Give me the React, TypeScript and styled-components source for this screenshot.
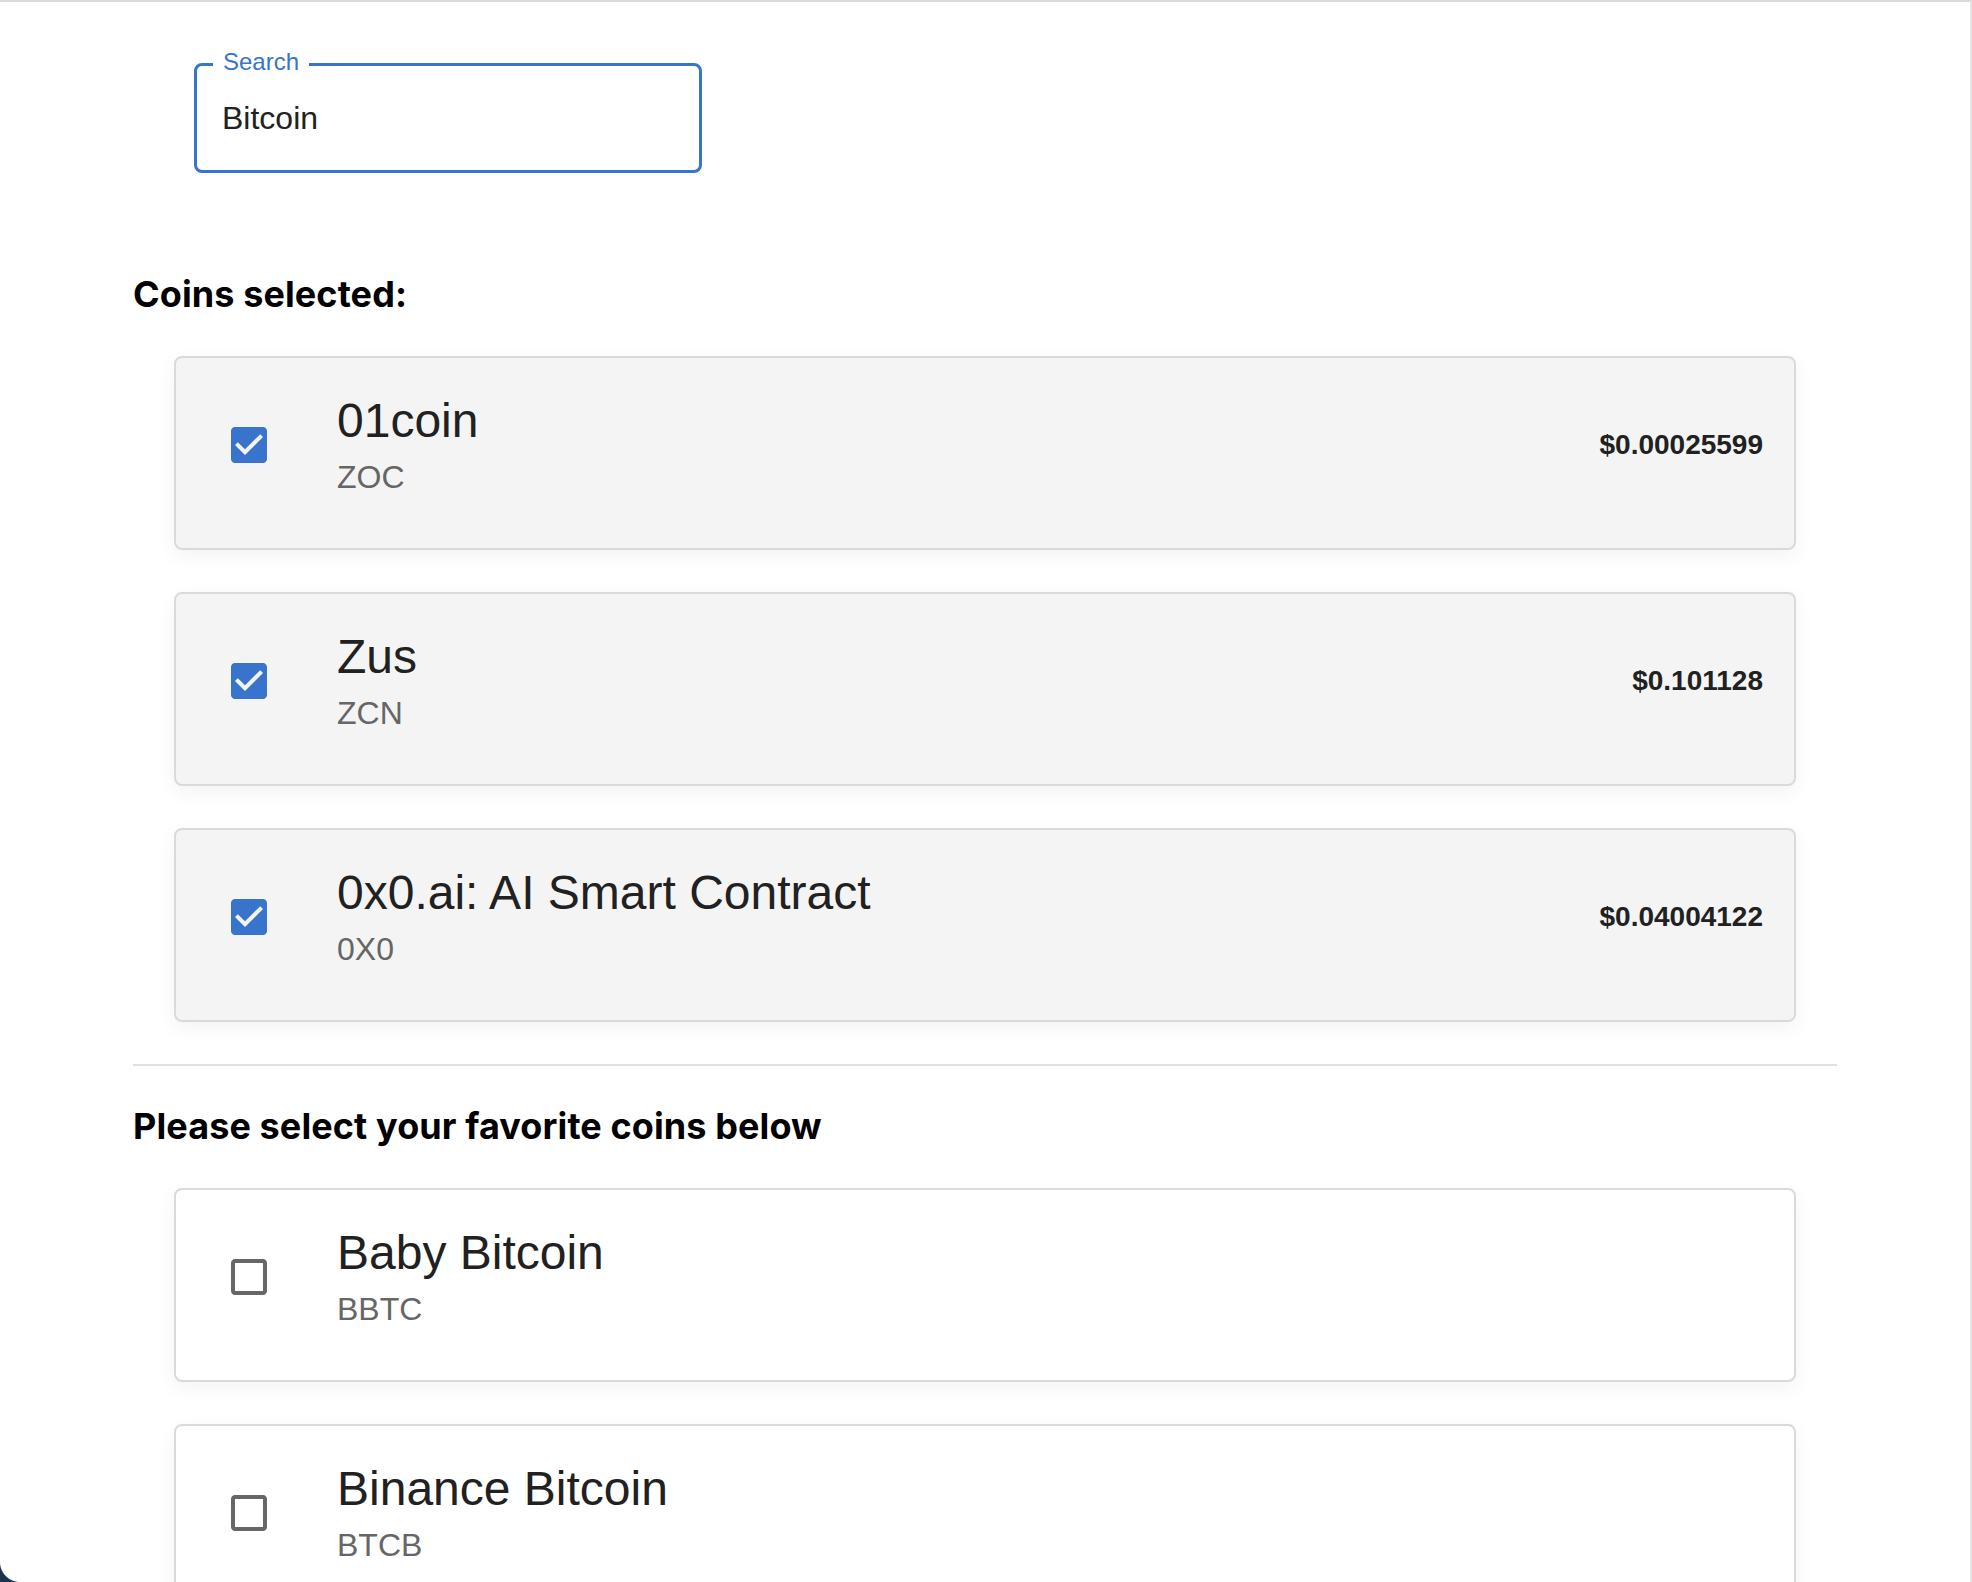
import React from "react";
import styled, { createGlobalStyle } from "styled-components";

const GlobalStyle = createGlobalStyle`
  html, body {
    margin: 0;
    padding: 0;
    background: #ffffff;
    overflow: hidden;
  }
  * { box-sizing: border-box; }
`;

const Frame = styled.div`
  height: 100vh;
  overflow: hidden;
  border-top: 2px solid #dcdcdc;
  border-right: 2px solid #e6e6e6;
  background: #ffffff;
  font-family: "Liberation Sans", Arial, sans-serif;
`;

const Page = styled.main`
  width: 1837px;
  padding: 61px 0 0 133px;
  display: flex;
  flex-direction: column;
`;

const SearchField = styled.label`
  position: relative;
  display: flex;
  align-items: center;
  margin-left: 61px;
  width: 508px;
  height: 110px;
  border: 3px solid #3874cb;
  border-radius: 8px;
  padding: 0 25px;
`;

const FieldLabel = styled.span`
  position: absolute;
  top: -16px;
  left: 16px;
  padding: 0 10px;
  background: #ffffff;
  color: #3874cb;
  font-size: 24px;
  line-height: 24px;
`;

const SearchInput = styled.input`
  border: none;
  outline: none;
  background: transparent;
  width: 100%;
  padding: 0;
  font-family: "Liberation Sans", Arial, sans-serif;
  font-size: 32px;
  color: #212121;
`;

const Heading = styled.h2<{ $gap: number }>`
  margin: ${(p) => p.$gap}px 0 0;
  font-family: Inter, Roboto, "Noto Sans", sans-serif;
  font-weight: 700;
  font-size: 36px;
  line-height: 44px;
  letter-spacing: 0.1px;
  color: #000000;
`;

const CardList = styled.div`
  margin: 40px 41px 0;
  display: flex;
  flex-direction: column;
  gap: 42px;
`;

const Card = styled.div<{ $selected: boolean }>`
  display: flex;
  align-items: center;
  gap: 46px;
  height: 194px;
  flex-shrink: 0;
  padding: 31px 31px 47px;
  border: 2px solid #dadada;
  border-radius: 8px;
  background: ${(p) => (p.$selected ? "#f4f4f4" : "#ffffff")};
  box-shadow: 0 6px 20px rgba(0, 0, 0, 0.05);
`;

const CheckButton = styled.span`
  width: 84px;
  height: 84px;
  padding: 18px;
  display: flex;
  flex-shrink: 0;
`;

const CoinInfo = styled.div`
  display: flex;
  flex-direction: column;
`;

const CoinName = styled.div`
  font-size: 48px;
  line-height: 64px;
  color: #212121;
`;

const CoinSymbol = styled.div`
  font-size: 32px;
  line-height: 48px;
  color: #666666;
`;

const Price = styled.div`
  margin-left: auto;
  font-size: 28px;
  font-weight: 700;
  color: #212121;
`;

const Divider = styled.hr`
  margin: 42px 0 0;
  border: none;
  height: 2px;
  background: #e0e0e0;
`;

const WindowCorner = styled.div`
  position: fixed;
  left: 0;
  bottom: 0;
  width: 20px;
  height: 20px;
  background: radial-gradient(circle at 100% 0, transparent 19.5px, #1d3352 20.5px);
`;

type Coin = { name: string; symbol: string; price?: string };

const selected: Coin[] = [
  { name: "01coin", symbol: "ZOC", price: "$0.00025599" },
  { name: "Zus", symbol: "ZCN", price: "$0.101128" },
  { name: "0x0.ai: AI Smart Contract", symbol: "0X0", price: "$0.04004122" },
];

const available: Coin[] = [
  { name: "Baby Bitcoin", symbol: "BBTC" },
  { name: "Binance Bitcoin", symbol: "BTCB" },
];

const CheckIcon = ({ checked }: { checked: boolean }) => (
  <svg width="48" height="48" viewBox="0 0 24 24">
    {checked ? (
      <path
        fill="#3874cb"
        d="M19 3H5c-1.11 0-2 .9-2 2v14c0 1.1.89 2 2 2h14c1.11 0 2-.9 2-2V5c0-1.1-.89-2-2-2zm-9 14l-5-5 1.41-1.41L10 14.170l7.59-7.59L19 8l-9 9z"
      />
    ) : (
      <path
        fill="#666666"
        d="M19 5v14H5V5h14m0-2H5c-1.1 0-2 .9-2 2v14c0 1.1.9 2 2 2h14c1.1 0 2-.9 2-2V5c0-1.1-.9-2-2-2z"
      />
    )}
  </svg>
);

const CoinCard = ({ coin, checked }: { coin: Coin; checked: boolean }) => (
  <Card $selected={checked}>
    <CheckButton>
      <CheckIcon checked={checked} />
    </CheckButton>
    <CoinInfo>
      <CoinName>{coin.name}</CoinName>
      <CoinSymbol>{coin.symbol}</CoinSymbol>
    </CoinInfo>
    {coin.price && <Price>{coin.price}</Price>}
  </Card>
);

export default function App() {
  return (
    <>
      <GlobalStyle />
      <Frame>
        <Page>
          <SearchField>
            <FieldLabel>Search</FieldLabel>
            <SearchInput defaultValue="Bitcoin" />
          </SearchField>
          <Heading $gap={99}>Coins selected:</Heading>
          <CardList>
            {selected.map((c) => (
              <CoinCard key={c.symbol} coin={c} checked />
            ))}
          </CardList>
          <Divider />
          <Heading $gap={38}>Please select your favorite coins below</Heading>
          <CardList>
            {available.map((c) => (
              <CoinCard key={c.symbol} coin={c} checked={false} />
            ))}
          </CardList>
        </Page>
      </Frame>
      <WindowCorner />
    </>
  );
}
